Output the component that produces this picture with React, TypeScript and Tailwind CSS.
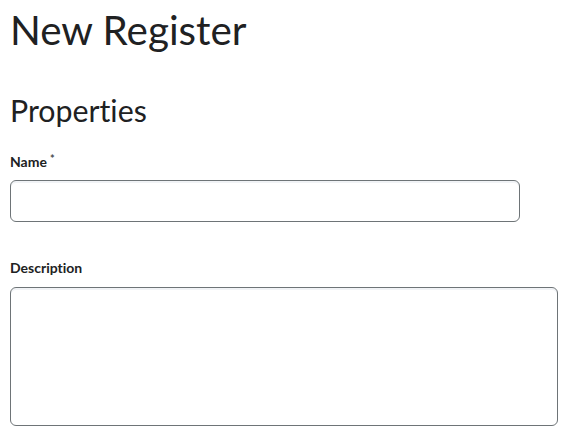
export default function App() {
  return (
    <div className="min-h-screen bg-white pl-[10px] pt-[6px] text-[#202122] [font-family:Lato,'Noto_Sans',sans-serif] [font-variant-ligatures:none]">
      <h1 className="text-[40.4px] font-normal leading-[48px]">New Register</h1>

      <h2 className="mt-[38px] text-[30.3px] font-normal leading-[36px]">Properties</h2>

      <form className="flex flex-col">
        <label className="mt-[25px] flex flex-col">
          <span className="text-[14px] font-bold leading-[17px]">
            Name
            <span className="ml-[3px] align-top text-[11px] font-bold leading-[12px] text-[#494c4e]">*</span>
          </span>
          <input
            type="text"
            className="mt-[10px] h-[42px] w-[510px] rounded-[6px] border border-[#6e7477] bg-white px-3 shadow-[inset_0_2px_0_0_rgba(185,194,208,0.2)] outline-none"
          />
        </label>

        <label className="mt-[37px] flex flex-col">
          <span className="text-[14px] font-bold leading-[17px]">Description</span>
          <textarea className="mt-[11px] h-[139px] w-[548px] resize-none rounded-[6px] border border-[#6e7477] bg-white px-3 py-2 shadow-[inset_0_2px_0_0_rgba(185,194,208,0.2)] outline-none" />
        </label>
      </form>
    </div>
  );
}
